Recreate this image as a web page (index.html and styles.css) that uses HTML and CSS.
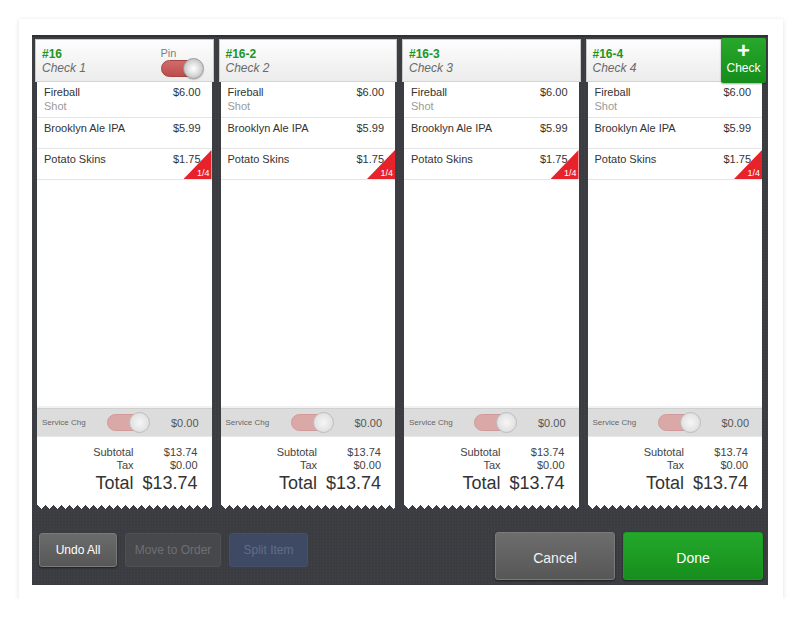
FILE: index.html
```html
<!DOCTYPE html>
<html lang="en">
<head>
    <meta charset="UTF-8">
    <title>Split Checks</title>
    <link rel="stylesheet" href="styles.css">
</head>
<body>
<div class="card">
  <div class="panel">
    <div class="checks">

      <div class="check">
        <div class="check-head">
          <div class="head-text">
            <div class="num">#16</div>
            <div class="name">Check 1</div>
          </div>
          <div class="pin">
            <span class="pin-label">Pin</span>
            <span class="toggle"><span class="knob"></span></span>
          </div>
        </div>
        <div class="check-body">
          <ul class="items">
            <li class="item tall"><div class="line"><span>Fireball</span><span>$6.00</span></div><div class="mod">Shot</div></li>
            <li class="item"><div class="line"><span>Brooklyn Ale IPA</span><span>$5.99</span></div></li>
            <li class="item"><div class="line"><span>Potato Skins</span><span>$1.75</span></div><span class="share">1/4</span></li>
          </ul>
          <div class="service">
            <span class="svc-label">Service Chg</span>
            <span class="toggle faded"><span class="knob"></span></span>
            <span class="svc-amt">$0.00</span>
          </div>
          <div class="totals">
            <span>Subtotal</span><span>$13.74</span>
            <span>Tax</span><span>$0.00</span>
            <span class="big">Total</span><span class="big">$13.74</span>
          </div>
        </div>
        <div class="zig"></div>
      </div>

      <div class="check">
        <div class="check-head">
          <div class="head-text">
            <div class="num">#16-2</div>
            <div class="name">Check 2</div>
          </div>
        </div>
        <div class="check-body">
          <ul class="items">
            <li class="item tall"><div class="line"><span>Fireball</span><span>$6.00</span></div><div class="mod">Shot</div></li>
            <li class="item"><div class="line"><span>Brooklyn Ale IPA</span><span>$5.99</span></div></li>
            <li class="item"><div class="line"><span>Potato Skins</span><span>$1.75</span></div><span class="share">1/4</span></li>
          </ul>
          <div class="service">
            <span class="svc-label">Service Chg</span>
            <span class="toggle faded"><span class="knob"></span></span>
            <span class="svc-amt">$0.00</span>
          </div>
          <div class="totals">
            <span>Subtotal</span><span>$13.74</span>
            <span>Tax</span><span>$0.00</span>
            <span class="big">Total</span><span class="big">$13.74</span>
          </div>
        </div>
        <div class="zig"></div>
      </div>

      <div class="check">
        <div class="check-head">
          <div class="head-text">
            <div class="num">#16-3</div>
            <div class="name">Check 3</div>
          </div>
        </div>
        <div class="check-body">
          <ul class="items">
            <li class="item tall"><div class="line"><span>Fireball</span><span>$6.00</span></div><div class="mod">Shot</div></li>
            <li class="item"><div class="line"><span>Brooklyn Ale IPA</span><span>$5.99</span></div></li>
            <li class="item"><div class="line"><span>Potato Skins</span><span>$1.75</span></div><span class="share">1/4</span></li>
          </ul>
          <div class="service">
            <span class="svc-label">Service Chg</span>
            <span class="toggle faded"><span class="knob"></span></span>
            <span class="svc-amt">$0.00</span>
          </div>
          <div class="totals">
            <span>Subtotal</span><span>$13.74</span>
            <span>Tax</span><span>$0.00</span>
            <span class="big">Total</span><span class="big">$13.74</span>
          </div>
        </div>
        <div class="zig"></div>
      </div>

      <div class="check">
        <div class="check-head">
          <div class="head-text">
            <div class="num">#16-4</div>
            <div class="name">Check 4</div>
          </div>
          <div class="add-check"><span class="plus">+</span><span>Check</span></div>
        </div>
        <div class="check-body">
          <ul class="items">
            <li class="item tall"><div class="line"><span>Fireball</span><span>$6.00</span></div><div class="mod">Shot</div></li>
            <li class="item"><div class="line"><span>Brooklyn Ale IPA</span><span>$5.99</span></div></li>
            <li class="item"><div class="line"><span>Potato Skins</span><span>$1.75</span></div><span class="share">1/4</span></li>
          </ul>
          <div class="service">
            <span class="svc-label">Service Chg</span>
            <span class="toggle faded"><span class="knob"></span></span>
            <span class="svc-amt">$0.00</span>
          </div>
          <div class="totals">
            <span>Subtotal</span><span>$13.74</span>
            <span>Tax</span><span>$0.00</span>
            <span class="big">Total</span><span class="big">$13.74</span>
          </div>
        </div>
        <div class="zig"></div>
      </div>

    </div>

    <div class="actions">
      <div class="btn undo">Undo All</div>
      <div class="btn move">Move to Order</div>
      <div class="btn split">Split Item</div>
      <div class="spacer"></div>
      <div class="btn cancel">Cancel</div>
      <div class="btn done">Done</div>
    </div>
  </div>
</div>
</body>
</html>
```

FILE: styles.css
```css
*{
    margin: 0;
    padding: 0;
    list-style: none;
    box-sizing: border-box;
}
body{
    background: #fff;
    font-family: "Liberation Sans", Arial, sans-serif;
    padding: 19px 0 0 19px;
}
.card{
    width: 764px;
    height: 580px;
    background: #fff;
    padding: 16px 15px 14px 13px;
    box-shadow: 0 1px 5px rgba(0,0,0,.12);
}
.panel{
    height: 550px;
    background-color: #3b3d42;
    background-image: repeating-linear-gradient(90deg, rgba(255,255,255,.015) 0, rgba(255,255,255,.015) 1px, transparent 1px, transparent 3px),
                      repeating-linear-gradient(0deg, rgba(0,0,0,.04) 0, rgba(0,0,0,.04) 1px, transparent 1px, transparent 3px);
    border-top: 2px solid #303136;
    padding: 2px 4px 0 3px;
    display: flex;
    flex-direction: column;
}
.checks{
    display: grid;
    grid-template-columns: repeat(4, 1fr);
    column-gap: 5px;
}
.check{
    display: flex;
    flex-direction: column;
}
.check-head{
    position: relative;
    height: 43px;
    padding: 7px 6px 0 6px;
    background: linear-gradient(#fdfdfd, #ececec);
    border: 1px solid #c9c9c9;
    border-bottom-color: #d4d4d4;
    display: flex;
    justify-content: space-between;
}
.num{
    color: #21961f;
    font-weight: bold;
    font-size: 12px;
    line-height: 14px;
}
.name{
    color: #6a6a6a;
    font-style: italic;
    font-size: 12px;
    line-height: 14px;
}
.pin{
    display: flex;
    flex-direction: column;
    align-items: flex-start;
    padding-right: 5px;
}
.pin-label{
    font-size: 11px;
    color: #808080;
    line-height: 12px;
}
.toggle{
    position: relative;
    display: block;
    width: 41px;
    height: 17px;
    margin-top: 1px;
    border-radius: 9px;
    background: linear-gradient(#d36b6b, #bd4d4d);
    border: 1px solid #a24444;
}
.toggle .knob{
    position: absolute;
    right: -3px;
    top: -3px;
    width: 21px;
    height: 21px;
    border-radius: 50%;
    border: 1px solid #9a9a9a;
    background: radial-gradient(circle at 50% 50%, #ffffff 0, #e6e6e6 35%, #c8c8c8 70%, #dedede 100%);
    box-shadow: 0 1px 1px rgba(0,0,0,.2);
}
.toggle.faded{
    background: #dba8a8;
    border-color: #d09a9a;
    margin: 0;
}
.toggle.faded .knob{
    background: radial-gradient(circle, #f6f6f6 0, #e4e4e4 60%, #d4d4d4 100%);
    border-color: #bdbdbd;
    box-shadow: none;
}
.add-check{
    position: absolute;
    right: -3px;
    top: -2px;
    width: 45px;
    height: 45px;
    background: linear-gradient(#28a82c, #168d1b);
    border-radius: 2px;
    color: #fff;
    display: flex;
    flex-direction: column;
    align-items: center;
    font-size: 12px;
    box-shadow: 0 1px 2px rgba(0,0,0,.35);
}
.add-check .plus{
    font-size: 22px;
    line-height: 20px;
    margin-top: 3px;
    font-weight: bold;
}
.check-body{
    margin: 0 2px;
    height: 423px;
    background: #fff;
    display: flex;
    flex-direction: column;
    font-size: 11px;
    color: #333;
}
.items{
    flex: 1;
}
.item{
    position: relative;
    height: 31px;
    padding: 3px 11px 0 7px;
    border-bottom: 1px solid #e6e6e6;
    overflow: hidden;
}
.item.tall{
    height: 36px;
}
.line{
    display: flex;
    justify-content: space-between;
    line-height: 14px;
}
.mod{
    color: #9a9a9a;
    line-height: 14px;
}
.share{
    position: absolute;
    right: 0;
    bottom: 0;
    width: 28px;
    height: 29px;
    background: #e8222b;
    clip-path: polygon(100% 0, 100% 100%, 0 100%);
    color: #fff;
    font-size: 9px;
    line-height: 10px;
    text-align: right;
    padding: 18px 2px 0 0;
}
.service{
    height: 29px;
    background: #dcdcdc;
    border-top: 1px solid #cfcfcf;
    border-bottom: 1px solid #e8e8e8;
    display: flex;
    align-items: center;
    padding: 0 13px 0 5px;
    box-shadow: 0 -2px 0 #f2f2f2;
}
.svc-label{
    font-size: 8px;
    color: #666;
    width: 65px;
}
.svc-amt{
    margin-left: auto;
    color: #555;
}
.totals{
    display: grid;
    grid-template-columns: 1fr 64px;
    padding: 9px 14px 11px 0;
    text-align: right;
    color: #444;
    line-height: 13px;
}
.totals .big{
    font-size: 18px;
    line-height: 22px;
    color: #333;
}
.zig{
    height: 5px;
    margin: 0 2px;
    background: linear-gradient(135deg, #fff 25%, transparent 25%) -4px 0,
                linear-gradient(225deg, #fff 25%, transparent 25%) -4px 0;
    background-size: 8px 8px;
    background-repeat: repeat-x;
}
.actions{
    display: flex;
    align-items: flex-start;
    gap: 8px;
    margin-top: 22px;
    padding: 0 1px 0 4px;
}
.spacer{
    flex: 1;
}
.btn{
    height: 34px;
    border-radius: 3px;
    display: flex;
    align-items: center;
    justify-content: center;
    font-size: 12px;
}
.undo{
    width: 78px;
    margin-top: 1px;
    background: linear-gradient(#6b6b6b, #575757);
    border: 1px solid #7a7a7a;
    color: #fff;
    box-shadow: 0 1px 2px rgba(0,0,0,.5);
}
.move{
    width: 96px;
    margin-top: 1px;
    background: #47484c;
    border: 1px solid #4f5054;
    color: #6d6f74;
}
.split{
    width: 79px;
    margin-top: 1px;
    background: #3e4a63;
    border: 1px solid #44506a;
    color: #5e6d8b;
}
.cancel{
    width: 120px;
    height: 48px;
    padding-top: 3px;
    background: linear-gradient(#6d6d6d, #565656);
    border: 1px solid #7a7a7a;
    color: #f2f2f2;
    font-size: 14px;
    box-shadow: 0 1px 2px rgba(0,0,0,.5);
}
.done{
    width: 140px;
    height: 48px;
    padding-top: 3px;
    background: linear-gradient(#24a82b, #168e1d);
    border: 1px solid #1d9a23;
    color: #fff;
    font-size: 14px;
    box-shadow: 0 1px 2px rgba(0,0,0,.5);
}
```
